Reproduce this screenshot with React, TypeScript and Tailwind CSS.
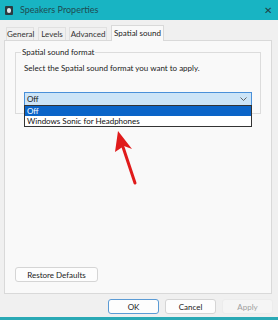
import React from "react";

const font = { fontFamily: 'Lato, "Noto Sans", Arial, sans-serif' };

function Tab({ label, active, w }: { label: string; active?: boolean; w: string }) {
  if (active) {
    return (
      <div className={`${w} h-[16px] border border-b-0 border-[#d9d9d9] bg-[#f9f9f9] text-[8px] leading-[14px] text-center text-[#1a1a1a] -mb-px relative z-10`}>
        {label}
      </div>
    );
  }
  return (
    <div className={`${w} h-[13px] border border-b-0 border-[#e0e0e0] bg-[#f0f0f0] text-[8px] leading-[12px] text-center text-[#333]`}>
      {label}
    </div>
  );
}

function Btn({ label, primary, disabled, w }: { label: string; primary?: boolean; disabled?: boolean; w: string }) {
  return (
    <div
      className={`${w} h-[15px] rounded-[3px] flex items-center justify-center text-[8px] ${
        primary
          ? "border border-[#5b9bd5] bg-[#fdfdfd] text-[#1a1a1a]"
          : disabled
          ? "border border-[#ececec] bg-[#f5f5f5] text-[#a0a0a0]"
          : "border border-[#d5d5d5] bg-[#fdfdfd] text-[#1a1a1a]"
      }`}
    >
      {label}
    </div>
  );
}

export default function App() {
  return (
    <div className="w-[278px] h-[320px] bg-[#f0f0f0] flex flex-col relative overflow-hidden" style={font}>
      {/* title bar */}
      <div className="h-[20px] bg-[#18b4c3] flex items-center pl-[5px] pr-[6px] shrink-0">
        <div className="w-[8px] h-[9px] rounded-[1px] bg-[#2b3a40] flex items-center justify-center">
          <div className="w-[4px] h-[5px] rounded-full bg-[#dfe7ea]" />
        </div>
        <span className="ml-[7px] text-[9px] text-[#1f4b52]">Speakers Properties</span>
        <span className="ml-auto text-[10px] text-[#1f3f45] leading-none">✕</span>
      </div>

      {/* tabs */}
      <div className="flex items-end pl-[6px] mt-[4px] h-[16px] shrink-0">
        <Tab label="General" w="w-[28px]" />
        <div className="w-[4px]" />
        <Tab label="Levels" w="w-[28px]" />
        <div className="w-[3px]" />
        <Tab label="Advanced" w="w-[38px]" />
        <div className="w-[4px]" />
        <Tab label="Spatial sound" active w="w-[53px]" />
      </div>

      {/* page */}
      <div className="mx-[4px] w-[268px] h-[254px] border border-[#d9d9d9] bg-[#f9f9f9] flex flex-col px-[10px] pt-[11px] shrink-0">
        <div className="relative border border-[#dcdcdc] h-[62px] px-[8px] pt-[9px]">
          <span className="absolute -top-[7px] left-[5px] px-[1px] bg-[#f9f9f9] text-[8px] text-[#1a1a1a] leading-[12px]">
            Spatial sound format
          </span>
          <div className="text-[8px] text-[#1a1a1a] leading-[12px]">
            Select the Spatial sound format you want to apply.
          </div>
          <div className="relative mt-[18px] h-[14px] border border-[#4a90d9] bg-[#cce4f7] flex items-center px-[2px]">
            <span className="text-[8px] text-[#1a1a1a]">Off</span>
            <svg className="ml-auto mr-[2px]" width="7" height="4" viewBox="0 0 7 4">
              <path d="M0.5 0.5 L3.5 3.5 L6.5 0.5" fill="none" stroke="#555" strokeWidth="0.9" />
            </svg>
            {/* open dropdown list */}
            <div className="absolute -left-px -right-px top-full border border-[#333] bg-white z-20">
              <div className="h-[10px] bg-[#0a64c8] text-white text-[8px] leading-[10px] pl-[2px]">Off</div>
              <div className="h-[10px] text-[#111] text-[8px] leading-[10px] pl-[2px]">Windows Sonic for Headphones</div>
            </div>
          </div>
        </div>
        <div className="flex-1" />
        <Btn label="Restore Defaults" w="w-[83px]" />
        <div className="h-[11px]" />
      </div>

      {/* bottom buttons */}
      <div className="flex justify-end gap-[6px] pr-[5px] mt-[5px]">
        <Btn label="OK" primary w="w-[51px]" />
        <Btn label="Cancel" w="w-[51px]" />
        <Btn label="Apply" disabled w="w-[51px]" />
      </div>
      <div className="mt-auto h-[3px] bg-[#2aa9b5]" />

      {/* red arrow */}
      <svg className="absolute left-[100px] top-[125px] z-30" width="50" height="64" viewBox="0 0 50 64">
        <path d="M35 58 L23 22" stroke="#e01b1b" strokeWidth="3" strokeLinecap="round" fill="none" />
        <path d="M18 6 L32 24 L24 21 L15 27 Z" fill="#e01b1b" />
      </svg>
    </div>
  );
}
